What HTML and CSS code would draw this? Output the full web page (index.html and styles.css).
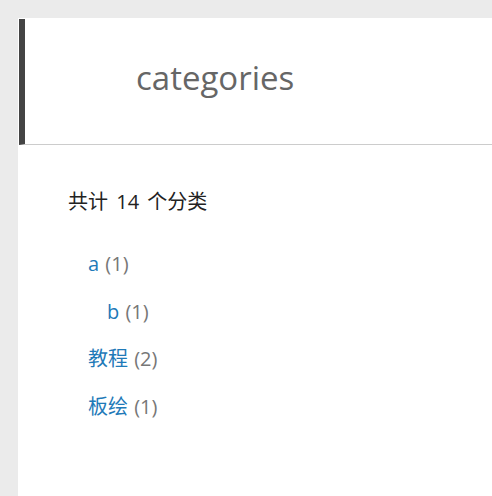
FILE: index.html
```html
<!DOCTYPE html>
<html>
<head>
<meta charset="utf-8">
<link rel="stylesheet" href="styles.css">
</head>
<body>
<div class="panel">
  <div class="header">
    <h1 class="title">categories</h1>
  </div>
  <div class="content">
    <div class="total">共计 14 个分类</div>
    <ul class="cat-list">
      <li class="cat-item"><a class="cat-link" href="#">a</a> <span class="cat-count">(1)</span>
        <ul class="cat-list child">
          <li class="cat-item"><a class="cat-link" href="#">b</a> <span class="cat-count">(1)</span></li>
        </ul>
      </li>
      <li class="cat-item"><a class="cat-link" href="#">教程</a> <span class="cat-count">(2)</span></li>
      <li class="cat-item"><a class="cat-link" href="#">板绘</a> <span class="cat-count">(1)</span></li>
    </ul>
  </div>
</div>
</body>
</html>
```
FILE: styles.css
```css
html, body {
  margin: 0;
  padding: 0;
}
body {
  background: #ebebeb;
  padding: 18px 0 0 18px;
  font-family: "Open Sans", "Noto Sans CJK SC", sans-serif;
  overflow: hidden;
  height: 478px;
}
.panel {
  background: #fff;
  height: 100%;
  padding-top: 1px;
  padding-left: 1px;
}
.header {
  border-left: 6px solid #444;
  border-bottom: 1px solid #ccc;
  height: 125px;
  display: flex;
  align-items: center;
  padding-left: 111px;
}
.title {
  margin: 0;
  font-weight: normal;
  font-size: 33px;
  color: #666;
  line-height: 1;
  padding-bottom: 8px;
}
.content {
  padding: 44px 0 0 49px;
}
.total {
  font-size: 20px;
  word-spacing: 3px;
  color: #222;
  line-height: 26px;
}
.cat-list {
  list-style: none;
  margin: 0;
  padding: 0 0 0 20px;
}
.content > .cat-list {
  margin-top: 25px;
}
.cat-list.child {
  padding-left: 19px;
}
.cat-item {
  font-size: 20px;
  word-spacing: 1px;
  line-height: 47.5px;
}
.cat-link {
  color: #1f7ab8;
  text-decoration: none;
}
.cat-count {
  color: #777;
}
```
